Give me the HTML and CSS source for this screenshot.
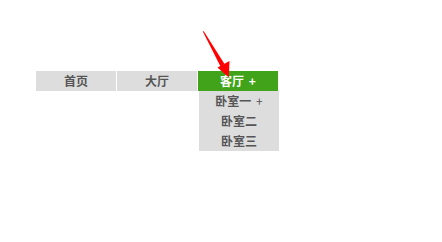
FILE: index.html
```html
<!DOCTYPE html>
<html>
<head>
<meta charset="utf-8">
<link rel="stylesheet" href="styles.css">
</head>
<body>
<div class="page">
  <ul class="nav">
    <li class="item">首页</li>
    <li class="item">大厅</li>
    <li class="item active">客厅 <span class="plus-main">+</span>
      <ul class="sub">
        <li class="sub-item">卧室一 <span class="plus">+</span></li>
        <li class="sub-item">卧室二</li>
        <li class="sub-item">卧室三</li>
      </ul>
    </li>
  </ul>
  <svg class="arrow" width="442" height="242" viewBox="0 0 442 242">
    <polygon points="202.8,31.5 203.8,31.3 224.5,64 220.5,66.5" fill="#ff0000"/>
    <polygon points="228.8,77.5 217.5,67.5 229.5,61" fill="#ff0000"/>
  </svg>
</div>
</body>
</html>
```
FILE: styles.css
```css
html, body {
  margin: 0;
  padding: 0;
  background: #fff;
}
.page {
  position: relative;
  width: 442px;
  height: 242px;
  padding: 71px 0 0 36px;
  box-sizing: border-box;
  font-family: "Noto Sans CJK SC", "Liberation Sans", sans-serif;
}
.nav {
  list-style: none;
  margin: 0;
  padding: 0;
  display: flex;
  gap: 1px;
}
.item {
  position: relative;
  width: 80px;
  height: 20px;
  line-height: 20px;
  background: #dddddd;
  color: #555555;
  font-size: 12px;
  font-weight: bold;
  text-align: center;
}
.item.active {
  background: #41a31a;
  color: #ffffff;
}
.plus-main {
  margin-left: 2px;
}
.sub {
  position: absolute;
  top: 20px;
  left: 1px;
  width: 80px;
  list-style: none;
  margin: 0;
  padding: 0;
  background: #dddddd;
}
.sub-item {
  height: 20px;
  line-height: 20px;
  color: #555555;
  font-size: 12px;
  font-weight: bold;
  text-align: center;
}
.plus {
  font-weight: normal;
  margin-left: 2px;
}
.arrow {
  position: absolute;
  left: 0;
  top: 0;
  pointer-events: none;
}
```
